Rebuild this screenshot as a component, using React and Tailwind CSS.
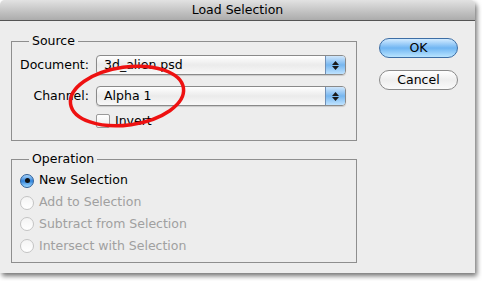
const font = { fontFamily: '"DejaVu Sans", "Liberation Sans", sans-serif' };

const Popup = ({ value }) => (
  <div className="flex h-[20px] w-[250px] overflow-hidden rounded-[4px] border border-[#8a8a8a] bg-gradient-to-b from-[#ffffff] via-[#ebebeb] to-[#f8f8f8] shadow-[0_1px_1px_rgba(0,0,0,0.15)]">
    <div className="flex flex-1 items-center pl-[7px] text-[12.5px] leading-none text-black">{value}</div>
    <div className="flex w-[20px] flex-col items-center justify-center gap-[1px] border-l border-[#6f8fb5] bg-gradient-to-b from-[#cfe6fb] via-[#76b6ef] to-[#bfe3ff]">
      <svg width="7" height="4" viewBox="0 0 7 4"><path d="M3.5 0 L7 4 L0 4 Z" fill="#1a1a1a" /></svg>
      <svg width="7" height="4" viewBox="0 0 7 4"><path d="M0 0 L7 0 L3.5 4 Z" fill="#1a1a1a" /></svg>
    </div>
  </div>
);

const Radio = ({ label, checked }) => (
  <div className="flex h-[21.7px] items-center gap-[5px]">
    {checked ? (
      <div className="flex h-[14px] w-[14px] items-center justify-center rounded-full border border-[#2f5f98] bg-gradient-to-b from-[#a9d6fc] via-[#2f84db] to-[#9fdaff]">
        <div className="h-[5px] w-[5px] rounded-full bg-[#111]" />
      </div>
    ) : (
      <div className="h-[14px] w-[14px] rounded-full border border-[#c4c4c4] bg-gradient-to-b from-[#f4f4f4] to-[#ffffff]" />
    )}
    <span className={checked ? 'text-[12.5px] text-black' : 'text-[12.5px] text-[#a0a0a0]'}>{label}</span>
  </div>
);

export default function App() {
  return (
    <div className="relative h-[281px] w-[482px] bg-white" style={font}>
      <div className="flex h-[273px] w-[475px] flex-col overflow-hidden rounded-t-[5px] bg-[#ededed] shadow-[2px_3px_5px_rgba(0,0,0,0.55)]">
        <div className="flex h-[21px] shrink-0 items-center justify-center border-b border-[#555] bg-gradient-to-b from-[#e2e2e2] to-[#acacac] text-[12.5px] text-black">
          Load Selection
        </div>

        <div className="flex flex-1">
          <div className="flex w-[357px] flex-col gap-[10px] pl-[11px] pt-[12px]">
            <fieldset className="h-[108px] w-[346px] border border-[#8e8e8e]">
              <legend className="ml-[17px] px-[3px] text-[12.5px] leading-[16px] text-black">Source</legend>
              <div className="flex flex-col pt-[6px]">
                <div className="flex items-center gap-[7px]">
                  <span className="w-[77px] text-right text-[12.5px] text-black">Document:</span>
                  <Popup value="3d_alien.psd" />
                </div>
                <div className="mt-[11px] flex items-center gap-[7px]">
                  <span className="w-[77px] text-right text-[12.5px] text-black">Channel:</span>
                  <Popup value="Alpha 1" />
                </div>
                <div className="mt-[6px] flex items-center gap-[5px] pl-[84px]">
                  <div className="h-[14px] w-[14px] rounded-[2px] border border-[#9a9a9a] bg-gradient-to-b from-[#ffffff] to-[#ececec]" />
                  <span className="text-[12.5px] text-black">Invert</span>
                </div>
              </div>
            </fieldset>

            <fieldset className="h-[112px] w-[346px] border border-[#8e8e8e]">
              <legend className="ml-[17px] px-[3px] text-[12.5px] leading-[16px] text-black">Operation</legend>
              <div className="flex flex-col pl-[8px] pt-[3px]">
                <Radio label="New Selection" checked />
                <Radio label="Add to Selection" />
                <Radio label="Subtract from Selection" />
                <Radio label="Intersect with Selection" />
              </div>
            </fieldset>
          </div>

          <div className="flex flex-col gap-[12px] pl-[22px] pt-[17px]">
            <button className="h-[20px] w-[79px] rounded-full border border-[#3d6ea5] bg-gradient-to-b from-[#d2ebff] via-[#6fb5f2] to-[#b8e4ff] text-[12.5px] leading-none text-black">
              OK
            </button>
            <button className="h-[20px] w-[79px] rounded-full border border-[#8a8a8a] bg-gradient-to-b from-[#ffffff] via-[#eeeeee] to-[#fafafa] text-[12.5px] leading-none text-black">
              Cancel
            </button>
          </div>
        </div>
      </div>

      <svg className="pointer-events-none absolute left-0 top-0" width="482" height="281">
        <ellipse cx="127" cy="96" rx="57" ry="29" transform="rotate(-8 127 96)" fill="none" stroke="#ee1111" strokeWidth="3.5" />
      </svg>
    </div>
  );
}
